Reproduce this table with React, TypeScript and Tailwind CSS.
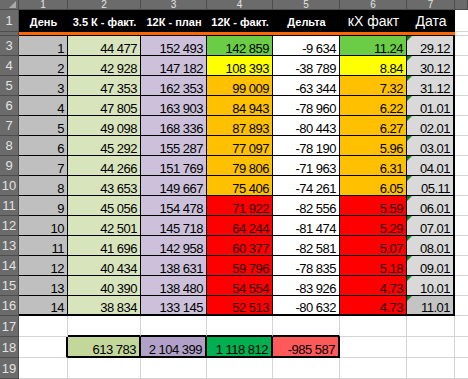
const LEVEL: Record<string, string> = {
  g: "bg-[#6bcd45]",
  y: "bg-[#ffff00]",
  o: "bg-[#ffc000]",
  r: "bg-[#ff0000]",
};

const rows: [number, string, string, string, string, string, string, string][] = [
  [1, "44 477", "152 493", "142 859", "-9 634", "11.24", "29.12", "g"],
  [2, "42 928", "147 182", "108 393", "-38 789", "8.84", "30.12", "y"],
  [3, "47 353", "162 353", "99 009", "-63 344", "7.32", "31.12", "o"],
  [4, "47 805", "163 903", "84 943", "-78 960", "6.22", "01.01", "o"],
  [5, "49 098", "168 336", "87 893", "-80 443", "6.27", "02.01", "o"],
  [6, "45 292", "155 287", "77 097", "-78 190", "5.96", "03.01", "o"],
  [7, "44 266", "151 769", "79 806", "-71 963", "6.31", "04.01", "o"],
  [8, "43 653", "149 667", "75 406", "-74 261", "6.05", "05.11", "o"],
  [9, "45 056", "154 478", "71 922", "-82 556", "5.59", "06.01", "r"],
  [10, "42 501", "145 718", "64 244", "-81 474", "5.29", "07.01", "r"],
  [11, "41 696", "142 958", "60 377", "-82 581", "5.07", "08.01", "r"],
  [12, "40 434", "138 631", "59 796", "-78 835", "5.18", "09.01", "r"],
  [13, "40 390", "138 480", "54 554", "-83 926", "4.73", "10.01", "r"],
  [14, "38 834", "133 145", "52 513", "-80 632", "4.73", "11.01", "r"],
];

const num =
  "flex items-end justify-end pr-[3px] whitespace-nowrap overflow-hidden text-[13px] leading-none tracking-[-0.5px]";

function RowHead({ label }: { label?: string | number }) {
  return (
    <div className="flex items-center justify-center bg-[#6b6b6b] border-r border-b border-[#4d4d4d] text-[13px] leading-none text-[#e2e2e2] overflow-hidden">
      {label}
    </div>
  );
}

function ColHead({ label }: { label?: string }) {
  return (
    <div className="flex items-end justify-center bg-[#6b6b6b] border-r border-b border-[#4d4d4d]">
      <span className="text-[10px] leading-[9px] text-[#e2e2e2]">{label}</span>
    </div>
  );
}

function Title({ children, big }: { children: string; big?: boolean }) {
  return (
    <div
      className={
        big
          ? "flex items-center justify-center bg-black text-white text-[14px] pt-[1px] whitespace-nowrap"
          : "flex items-center justify-center bg-black text-white text-[11px] font-bold pt-[2px] whitespace-nowrap"
      }
    >
      {children}
    </div>
  );
}

function Blank({ n }: { n: number }) {
  return (
    <>
      <RowHead label={n} />
      {Array.from({ length: 7 }).map((_, i) => (
        <div
          key={i}
          className={
            n === 17 && i >= 1 && i <= 4
              ? "border-r border-b-2 border-[#d4d4d4] border-b-black"
              : "border-r border-b border-[#d4d4d4]"
          }
        />
      ))}
      <div className="border-b border-[#d4d4d4]" />
    </>
  );
}

export default function App() {
  return (
    <div className="w-[468px] h-[379px] overflow-hidden bg-white text-black font-['Liberation_Sans',Arial,sans-serif]">
      <div className="grid grid-cols-[19px_49px_73px_66px_66px_67px_67px_48px_1fr] grid-rows-[10px_22px_4px_repeat(14,20px)_21px_21px_21px]">
        {/* column numbers */}
        <div className="relative bg-[#6b6b6b] border-r border-b border-[#4d4d4d]">
          <svg className="absolute right-[2px] bottom-[1px]" width="7" height="7" viewBox="0 0 7 7">
            <path d="M7 0 L7 7 L0 7 Z" fill="#a9a9a9" />
          </svg>
        </div>
        {["1", "2", "3", "4", "5", "6", "7", ""].map((c, i) => (
          <ColHead key={i} label={c} />
        ))}

        {/* row 1: titles */}
        <RowHead label={1} />
        <Title>День</Title>
        <Title>3.5 К - факт.</Title>
        <Title>12К - план</Title>
        <Title>12К - факт.</Title>
        <Title>Дельта</Title>
        <Title big>кХ факт</Title>
        <Title big>Дата</Title>
        <div className="border-b border-[#d4d4d4]" />

        {/* row 2: orange band */}
        <RowHead />
        {Array.from({ length: 7 }).map((_, i) => (
          <div key={i} className="bg-[#ff6600] border-b border-black" />
        ))}
        <div className="border-b border-[#d4d4d4]" />

        {rows.map(([day, a, plan, fact, delta, k, date, lvl], i) => {
          const last = i === rows.length - 1;
          const b = last ? "border-r border-b-2 border-black" : "border-r border-b border-black";
          return (
            <div key={day} className="contents">
              <RowHead label={day + 2} />
              <div className={`${num} ${b} bg-[#bfbfbf]`}>{day}</div>
              <div className={`${num} ${b} bg-[#d8e4bc]`}>{a}</div>
              <div className={`${num} ${b} bg-[#ccc0da]`}>{plan}</div>
              <div className={`${num} ${b} ${LEVEL[lvl]} ${lvl === "r" ? "text-[#2a0000]" : ""}`}>{fact}</div>
              <div className={`${num} ${b} bg-white`}>{delta}</div>
              <div className={`${num} ${b} ${LEVEL[lvl]} ${lvl === "r" ? "text-[#2a0000]" : ""}`}>{k}</div>
              <div
                className={`${num} relative border-r-2 border-black ${
                  last ? "border-b-2 bg-[#c4c4c4]" : "border-b bg-[#d9d9d9]"
                }`}
              >
                <span className="absolute left-0 top-0 w-0 h-0 border-t-[5px] border-r-[5px] border-t-[#127a12] border-r-transparent" />
                {date}
              </div>
              <div className="border-b border-[#d4d4d4]" />
            </div>
          );
        })}

        <Blank n={17} />

        {/* row 18: totals */}
        <RowHead label={18} />
        <div className="border-r-2 border-b border-[#d4d4d4] border-r-black" />
        <div className={`${num} border-r-2 border-b-2 border-black bg-[#c4d79b]`}>613 783</div>
        <div className={`${num} border-r-2 border-b-2 border-black bg-[#b1a0c7]`}>2 104 399</div>
        <div className={`${num} border-r-2 border-b-2 border-black bg-[#00b050]`}>1 118 812</div>
        <div className={`${num} border-r-2 border-b-2 border-black bg-[#ff5a5a]`}>-985 587</div>
        <div className="border-r border-b border-[#d4d4d4]" />
        <div className="border-r border-b border-[#d4d4d4]" />
        <div className="border-b border-[#d4d4d4]" />

        <Blank n={19} />
      </div>
    </div>
  );
}
